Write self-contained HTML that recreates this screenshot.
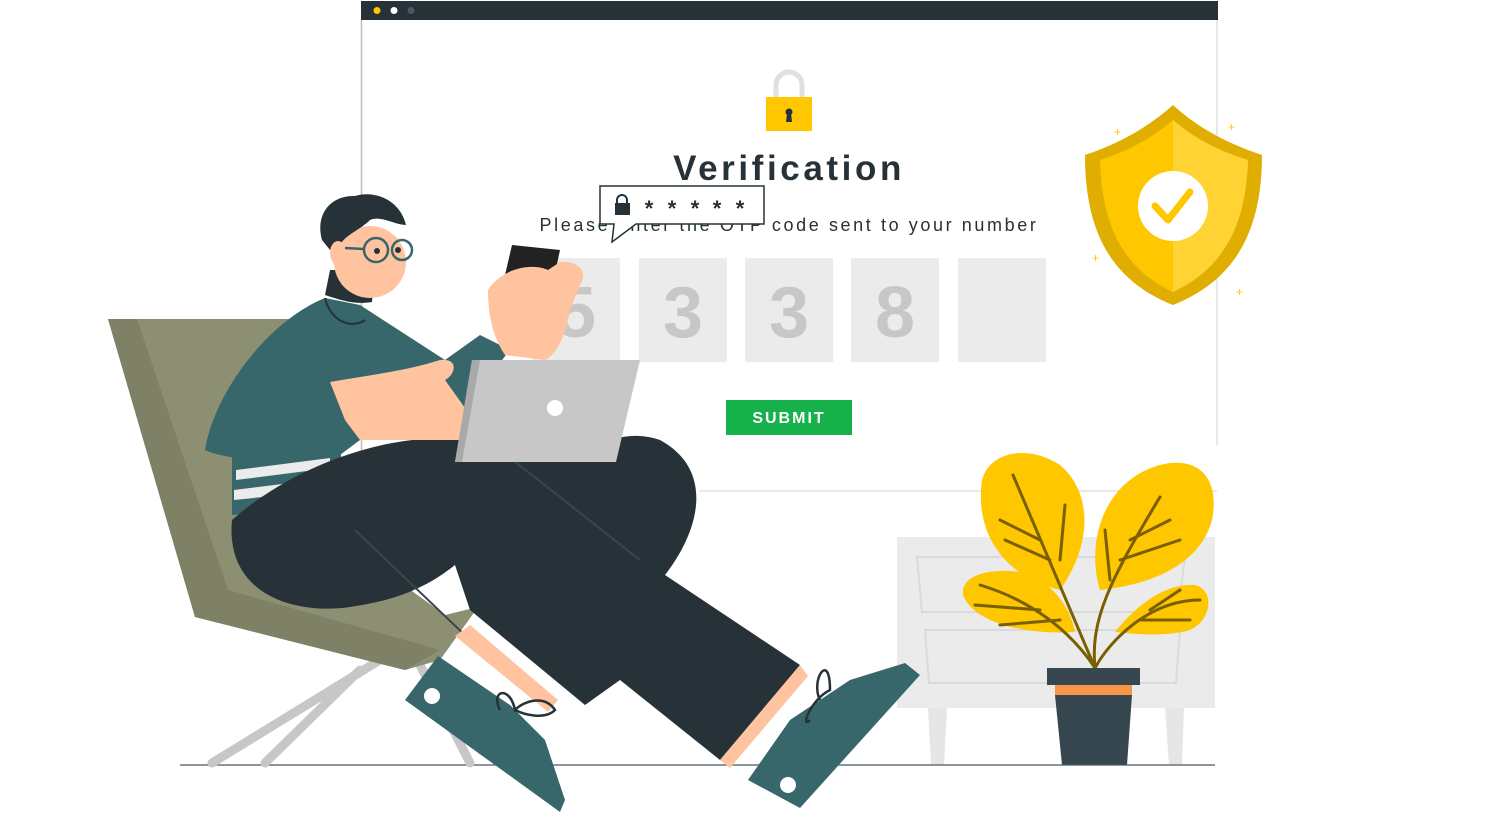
<!DOCTYPE html>
<html><head><meta charset="utf-8"><style>
html,body{margin:0;padding:0;background:#fff;width:1500px;height:816px;overflow:hidden}
svg{display:block}
text{font-family:"Liberation Sans",sans-serif}
</style></head><body>
<svg width="1500" height="816" viewBox="0 0 1500 816" xmlns="http://www.w3.org/2000/svg">
<line x1="361.5" y1="20" x2="361.5" y2="490" stroke="#bdbdbd" stroke-width="1.5"/>
<line x1="1217" y1="20" x2="1217" y2="445" stroke="#e0e0e0" stroke-width="1.5"/>
<line x1="700" y1="491" x2="1217" y2="491" stroke="#e0e0e0" stroke-width="1.5"/>
<rect x="361" y="1" width="857" height="19" fill="#263238"/>
<circle cx="377" cy="10.5" r="3.5" fill="#FFC700"/>
<circle cx="394" cy="10.5" r="3.5" fill="#fff"/>
<circle cx="411" cy="10.5" r="3.5" fill="#455A64"/>
<path d="M776 97 V85 a13 13 0 0 1 26 0 V97" fill="none" stroke="#e0e0e0" stroke-width="5"/>
<rect x="766" y="97" width="46" height="34" fill="#FFC700"/>
<circle cx="789" cy="112" r="3.5" fill="#263238"/><path d="M787 113 h4 l1 9 h-6z" fill="#263238"/>
<text x="789" y="180" text-anchor="middle" font-size="35" font-weight="bold" letter-spacing="3.6" fill="#263238">Verification</text>
<text x="789" y="231" text-anchor="middle" font-size="18" letter-spacing="2.6" fill="#263238">Please enter the OTP code sent to your number</text>
<g fill="#ebebeb"><rect x="532" y="258" width="88" height="104"/><rect x="639" y="258" width="88" height="104"/><rect x="745" y="258" width="88" height="104"/><rect x="851" y="258" width="88" height="104"/><rect x="958" y="258" width="88" height="104"/></g>
<g font-size="72" fill="#c7c7c7" text-anchor="middle" font-weight="bold"><text x="576" y="337">5</text><text x="683" y="337">3</text><text x="789" y="337">3</text><text x="895" y="337">8</text></g>
<rect x="726" y="400" width="126" height="35" fill="#17b14c"/>
<text x="789" y="423" text-anchor="middle" font-size="16" font-weight="bold" letter-spacing="2" fill="#fff">SUBMIT</text>
<path d="M600 186 H764 V224 H636 L612 242 L614 224 H600 Z" fill="#fff" stroke="#263238" stroke-width="1.5"/>
<path d="M617 204 v-4 a5 5 0 0 1 10 0 v4" fill="none" stroke="#263238" stroke-width="2"/>
<rect x="615" y="203" width="15" height="12" fill="#263238"/>
<g font-size="22" fill="#263238" font-weight="bold" text-anchor="middle"><text x="649" y="216">*</text><text x="672" y="216">*</text><text x="695" y="216">*</text><text x="717" y="216">*</text><text x="740" y="216">*</text></g>
<path d="M1173 105 C1145 130 1115 145 1085 155 C1085 230 1110 280 1173 305 C1236 280 1262 230 1262 155 C1232 145 1200 130 1173 105Z" fill="#E0AE00"/>
<path d="M1173 120 C1150 140 1125 152 1100 160 C1102 225 1122 268 1173 292 C1224 268 1246 225 1248 160 C1222 152 1196 140 1173 120Z" fill="#FFC700"/>
<path d="M1173 120 C1196 140 1222 152 1248 160 C1246 225 1224 268 1173 292Z" fill="#FFD333"/>
<circle cx="1173" cy="206" r="35" fill="#fff"/>
<path d="M1155 206 l13 14 l22 -28" fill="none" stroke="#FFC700" stroke-width="7" stroke-linecap="round" stroke-linejoin="round"/>
<g fill="#FFC700" font-size="12"><text x="1114" y="136">+</text><text x="1092" y="262">+</text><text x="1236" y="296">+</text><text x="1228" y="131">+</text></g>
<rect x="897" y="537" width="318" height="171" fill="#ebebeb"/>
<path d="M917 557 H1185 L1178 612 H922Z M925 630 H1180 L1176 683 H929Z" fill="none" stroke="#dadada" stroke-width="2"/>
<path d="M928 708 h19 l-3 57 h-13z M1165 708 h19 l-2 57 h-13z" fill="#e6e6e6"/>
<g fill="#FFC700">
<path d="M1060 590 C1000 575 975 530 982 480 C990 450 1030 445 1060 465 C1090 490 1095 540 1060 590Z"/>
<path d="M1100 590 C1085 540 1105 480 1160 465 C1200 455 1220 480 1212 520 C1200 565 1150 585 1100 590Z"/>
<path d="M1075 632 C1030 635 975 625 963 595 C960 575 990 568 1020 572 C1050 580 1070 605 1075 632Z"/>
<path d="M1115 632 C1140 600 1170 583 1195 585 C1215 590 1212 620 1190 630 C1170 636 1140 635 1115 632Z"/>
</g>
<g fill="none" stroke="#7A5F00" stroke-width="3" stroke-linecap="round">
<path d="M1095 668 L1013 475 M1095 668 C1090 620 1110 580 1160 497 M1095 668 C1070 630 1030 600 980 585 M1095 668 C1110 640 1150 600 1200 600"/>
<path d="M1040 540 L1000 520 M1050 560 L1005 540 M1060 560 L1065 505 M1120 560 L1180 540 M1130 540 L1170 520 M1110 580 L1105 530 M1040 610 L975 605 M1060 620 L1000 625 M1140 620 L1190 620 M1150 610 L1180 590"/>
</g>
<rect x="1047" y="668" width="93" height="17" fill="#37474F"/>
<rect x="1055" y="685" width="77" height="10" fill="#F79646"/>
<path d="M1055 695 H1132 L1127 765 H1062Z" fill="#37474F"/>
<line x1="180" y1="765" x2="1215" y2="765" stroke="#455A64" stroke-width="1.2"/>
<g stroke="#c7c7c7" stroke-width="9" stroke-linecap="round">
<line x1="380" y1="660" x2="212" y2="763"/><line x1="360" y1="670" x2="265" y2="763"/><line x1="420" y1="665" x2="470" y2="763"/>
</g>
<path d="M108 319 H290 L245 470 L445 615 L478 607 L440 660 L405 670 L195 617Z" fill="#8C8F72"/>
<path d="M108 319 H137 L228 590 L440 650 L405 670 L195 617Z" fill="#7F8166"/>
<path d="M232 455 L340 450 L350 505 L232 515Z" fill="#37676A"/>
<path d="M236 470 L330 458 L330 468 L236 480Z M234 490 L330 478 L330 490 L234 500Z" fill="#ebebeb"/>
<path d="M232 520 C225 595 295 615 350 607 C400 600 430 585 455 565 L470 610 L585 705 L620 680 L720 760 L800 665 L665 575 C700 530 715 470 660 440 C630 430 605 440 590 452 L470 440 C400 430 300 460 232 520Z" fill="#263238"/>
<path d="M355 530 L470 640 M500 450 L640 560" stroke="#37474F" stroke-width="2"/>
<path d="M455 636 L470 625 L558 700 L548 712Z" fill="#FFC3A0"/>
<path d="M720 760 L800 665 L808 676 L730 768Z" fill="#FFC3A0"/>
<path d="M405 700 L438 656 L510 705 L545 740 L565 800 L560 812 Z" fill="#37676A"/>
<circle cx="432" cy="696" r="8" fill="#fff"/>
<path d="M748 780 L790 720 L850 680 L905 663 L920 675 L800 808Z" fill="#37676A"/>
<circle cx="788" cy="785" r="8" fill="#fff"/>
<g fill="none" stroke="#263238" stroke-width="2.5"><path d="M500 710 c-10 -20 10 -25 15 0 c10 -10 30 -15 40 0 c-10 10 -30 5 -40 0"/><path d="M820 700 c-10 -20 10 -50 10 -10 c-20 10 -30 40 -20 30"/></g>
<path d="M205 450 C215 390 270 320 325 298 L360 305 L445 360 L480 335 L510 350 L470 400 L460 440 L360 440 L340 455 C290 462 230 462 205 450Z" fill="#37676A"/>
<path d="M325 298 C330 320 350 330 365 320" fill="none" stroke="#263238" stroke-width="2"/>
<path d="M330 270 L375 270 L372 302 C355 305 340 300 325 295Z" fill="#263238"/>
<path d="M332 260 L378 262 L370 290 L342 285Z" fill="#FFC3A0"/>
<ellipse cx="370" cy="262" rx="36" ry="36" fill="#FFC3A0"/>
<path d="M322 240 C315 215 330 195 355 196 C375 190 400 200 406 225 C395 225 380 215 370 220 C360 230 345 235 340 245 L330 250Z" fill="#263238"/>
<ellipse cx="338" cy="253" rx="8" ry="12" fill="#FFC3A0"/>
<g fill="none" stroke="#37676A" stroke-width="2.5"><circle cx="376" cy="250" r="12"/><circle cx="402" cy="250" r="10"/><line x1="345" y1="248" x2="364" y2="249"/></g>
<circle cx="377" cy="251" r="3" fill="#263238"/><circle cx="398" cy="250" r="3" fill="#263238"/>
<path d="M512 245 L560 250 L545 320 L495 318Z" fill="#222"/>
<path d="M488 290 C500 270 530 262 548 270 L560 262 C575 260 590 270 580 285 L570 310 C565 340 555 355 545 360 L505 355 C495 340 488 320 488 290Z" fill="#FFC3A0"/>
<path d="M330 382 C370 375 410 370 440 360 C460 358 455 375 445 380 L470 415 L460 440 L360 440 L345 420Z" fill="#FFC3A0"/>
<path d="M472 360 H640 L616 462 H455Z" fill="#c7c7c7"/>
<path d="M472 360 H480 L462 462 H455Z" fill="#a9a9a9"/>
<ellipse cx="555" cy="408" rx="8" ry="8" fill="#fff"/>
</svg>
</body></html>
